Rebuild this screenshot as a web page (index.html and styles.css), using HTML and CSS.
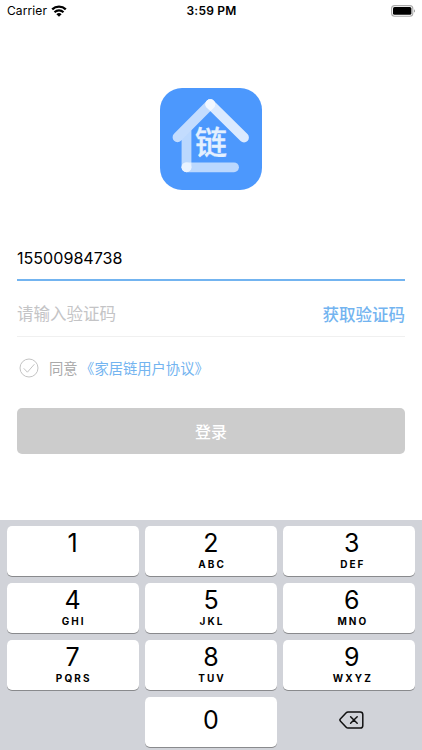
FILE: index.html
```html
<!DOCTYPE html>
<html lang="zh-CN">
<head>
    <meta charset="UTF-8">
    <meta name="viewport" content="width=device-width, initial-scale=1.0">
    <title>登录</title>
    <link rel="stylesheet" href="styles.css">
</head>
<body>
<!-- 状态栏 -->
<header class="status-bar">
    <div class="carrier">
        <span>Carrier</span>
        <svg class="wifi" width="16" height="12" viewBox="0 0 16 12">
            <path d="M1.2 4.4a9.8 9.8 0 0 1 13.6 0" fill="none" stroke="#000" stroke-width="2.3"/>
            <path d="M3.5 7.2a6.4 6.4 0 0 1 9 0" fill="none" stroke="#000" stroke-width="2.1"/>
            <path d="M5.4 9.2a3.7 3.7 0 0 1 5.2 0L8 11.8z"/>
        </svg>
    </div>
    <div class="time">3:59 PM</div>
    <svg class="battery" width="25" height="12" viewBox="0 0 25 12">
        <rect x="0.6" y="0.6" width="21.2" height="10.6" rx="3" fill="#fff" stroke="#aaa" stroke-width="1.1"/>
        <rect x="2" y="2" width="18.4" height="7.8" rx="1.6"/>
        <path d="M23 4.2c1.3.5 1.3 2.9 0 3.4z" fill="#999"/>
    </svg>
</header>

<!-- 登录表单 -->
<main class="login">
    <svg class="logo" width="102" height="102" viewBox="0 0 102 102">
        <rect width="102" height="102" rx="22" fill="#4c98fd"/>
        <g fill="none" stroke="#fff" stroke-linecap="round" stroke-width="9.8">
            <path d="M26.5 79V43" stroke-opacity=".62"/>
            <path d="M26.5 79.3H74" stroke-opacity=".62"/>
            <path d="M50.3 16.2L17.5 49.3" stroke="#c3dcfe"/>
            <path d="M50.3 16.2L84 49.5" stroke-opacity=".8"/>
        </g>
        <circle cx="50.3" cy="16.2" r="4.9" fill="#f3f8ff"/>
        <circle cx="26.5" cy="79.3" r="4.9" fill="#eaf3ff"/>
        <text class="logo-text" x="51" y="66" text-anchor="middle">链</text>
    </svg>
    <div class="field phone">15500984738</div>
    <div class="field code">
        <span class="placeholder">请输入验证码</span>
        <a class="get-code">获取验证码</a>
    </div>
    <div class="agreement">
        <svg width="20" height="20" viewBox="0 0 20 20" fill="none" stroke="#c4c4c4">
            <circle cx="10" cy="10" r="9"/>
            <path d="M4.7 10.3l3.7 3.9 7-8"/>
        </svg>
        <span class="agree">同意</span>
        <a class="protocol">《家居链用户协议》</a>
    </div>
    <button class="submit">登录</button>
</main>

<!-- 数字键盘 -->
<section class="keyboard">
    <div class="key"><b>1</b></div>
    <div class="key"><b>2</b><i>ABC</i></div>
    <div class="key right"><b>3</b><i>DEF</i></div>
    <div class="key"><b>4</b><i>GHI</i></div>
    <div class="key"><b>5</b><i>JKL</i></div>
    <div class="key right"><b>6</b><i>MNO</i></div>
    <div class="key"><b>7</b><i>PQRS</i></div>
    <div class="key"><b>8</b><i>TUV</i></div>
    <div class="key right"><b>9</b><i>WXYZ</i></div>
    <div class="key empty"></div>
    <div class="key zero"><b>0</b></div>
    <div class="key empty right">
        <svg width="25" height="18" viewBox="0 0 25 18" fill="none" stroke="#111" stroke-width="1.5" stroke-linejoin="round" stroke-linecap="round">
            <path d="M9 1h12.2a2.6 2.6 0 0 1 2.6 2.6v10.8a2.6 2.6 0 0 1-2.6 2.6H9a2.5 2.5 0 0 1-1.8-.8L1.5 10.2a1.7 1.7 0 0 1 0-2.4L7.2 1.8A2.5 2.5 0 0 1 9 1z"/>
            <path d="M11.6 5.7l6.6 6.6M18.2 5.7l-6.6 6.6"/>
        </svg>
    </div>
</section>
</body>
</html>
```

FILE: styles.css
```css
* {
    margin: 0;
    padding: 0;
    box-sizing: border-box;
}
body {
    width: 422px;
    height: 750px;
    overflow: hidden;
    display: flex;
    flex-direction: column;
    background: #fff;
    color: #000;
    font-family: Inter, "Noto Sans CJK SC", sans-serif;
}

/* 状态栏 */
.status-bar {
    height: 22px;
    padding: 0 6px 1px 7px;
    display: grid;
    grid-template-columns: 1fr auto 1fr;
    align-items: center;
    font-size: 12px;
}
.carrier {
    display: flex;
    align-items: center;
    gap: 4px;
    letter-spacing: 0.1px;
}
.time {
    font-weight: 600;
    letter-spacing: 0.2px;
}
.battery {
    justify-self: end;
}

/* 登录表单 */
.login {
    height: 497.5px;
    padding: 66px 17px 0;
    display: flex;
    flex-direction: column;
}
.logo {
    align-self: center;
    flex-shrink: 0;
}
.logo-text {
    font-size: 32px;
    font-weight: 500;
    fill: #e4f0ff;
    stroke: #e4f0ff;
    stroke-width: 0.3px;
    stroke-linejoin: round;
}
.field {
    display: flex;
    align-items: center;
    justify-content: space-between;
    font-size: 16.5px;
}
.phone {
    height: 47px;
    margin-top: 44px;
    padding-top: 2px;
    border-bottom: 2px solid #73b4f0;
    font-size: 16.1px;
}
.code {
    height: 56px;
    padding-top: 10px;
    border-bottom: 1px solid #f0f0f0;
}
.placeholder {
    margin-top: -1px;
    color: #c4c4c6;
}
.get-code {
    color: #73b4f0;
    font-weight: 500;
}
.agreement {
    margin-top: 20px;
    height: 22px;
    padding-left: 2px;
    display: flex;
    align-items: center;
    font-size: 14.3px;
}
.agree,
.protocol {
    margin-top: -2px;
}
.agree {
    margin-left: 10px;
    color: #aaa;
}
.protocol {
    margin-left: 2.5px;
    color: #73b4f0;
}
.submit {
    height: 46px;
    margin-top: 29px;
    border: none;
    border-radius: 5px;
    background: #ccc;
    color: #fff;
    font-family: inherit;
    font-size: 16px;
    font-weight: 500;
}

/* 键盘 */
.keyboard {
    flex: 1;
    padding: 6px 6.5px 0;
    background: #d1d3d9;
    display: grid;
    grid-template-columns: repeat(3, 1fr);
    grid-auto-rows: 50px;
    gap: 7px 6px;
}
.key {
    padding-top: 2px;
    border-radius: 5px;
    background: #fff;
    box-shadow: 0 1px 0 #898a8d;
    display: flex;
    flex-direction: column;
    align-items: center;
}
.key b {
    font-size: 25px;
    font-weight: 400;
    line-height: 31px;
}
.key i {
    font-size: 10px;
    font-style: normal;
    font-weight: 700;
    line-height: 11px;
    letter-spacing: 2.1px;
    margin-right: -2.1px;
}
.right {
    padding-left: 5px;
}
.zero {
    padding-top: 0;
    padding-bottom: 2px;
    justify-content: center;
}
.empty {
    padding-top: 0;
    padding-bottom: 3px;
    justify-content: center;
    background: none;
    box-shadow: none;
}
```
